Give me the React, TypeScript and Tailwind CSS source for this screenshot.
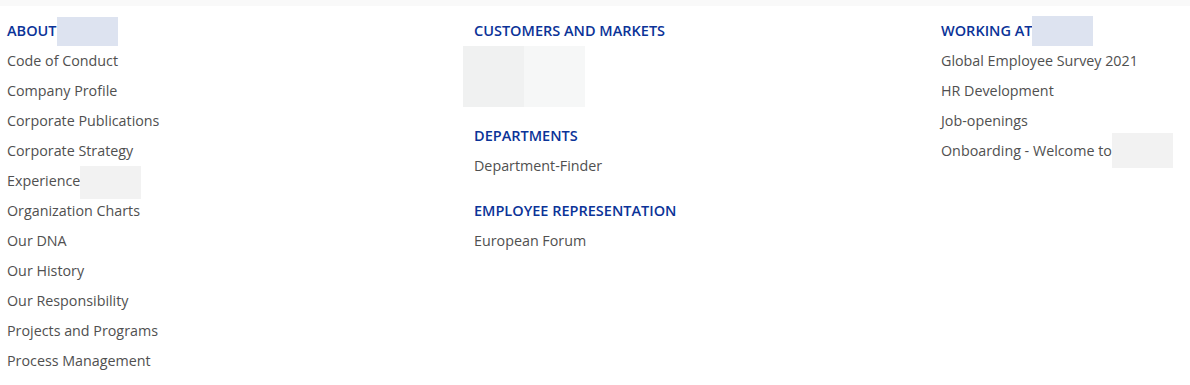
export default function App() {
  const about = [
    "Code of Conduct",
    "Company Profile",
    "Corporate Publications",
    "Corporate Strategy",
    "Experience",
    "Organization Charts",
    "Our DNA",
    "Our History",
    "Our Responsibility",
    "Projects and Programs",
    "Process Management",
  ];
  const working = ["Global Employee Survey 2021", "HR Development", "Job-openings", "Onboarding - Welcome to"];

  const heading = "h-[30px] leading-[29px] text-[14.5px] font-semibold uppercase text-[#0b3398]";
  const link = "h-[30px] leading-[30px] text-[14.3px] text-[#505050] whitespace-nowrap";

  return (
    <div className="w-[1190px] h-[385px] bg-white overflow-hidden" style={{ fontFamily: '"Open Sans", "Noto Sans", sans-serif' }}>
      <div className="h-[6px] bg-[#f9f9f9]" />
      <div className="grid grid-cols-[467px_467px_1fr] pl-[7px] pt-[10px]">
        {/* About */}
        <div>
          <div className={heading + " flex items-start"}>
            ABOUT
            <span className="inline-block w-[61px] h-[29px] mt-[1px] bg-[#dde3f0]" />
          </div>
          {about.map((item) => (
            <div key={item} className={link + " flex items-start"}>
              {item}
              {item === "Experience" && <span className="inline-block w-[61px] h-[33px] bg-[#f2f2f2]" />}
            </div>
          ))}
        </div>

        {/* Customers and markets */}
        <div>
          <div className={heading}>Customers and Markets</div>
          <div className="flex -ml-[11px] h-[61px]">
            <div className="w-[61px] bg-[#f0f1f1]" />
            <div className="w-[61px] bg-[#f6f7f7]" />
          </div>
          <div className={heading + " mt-[14px]"}>Departments</div>
          <div className={link}>Department-Finder</div>
          <div className={heading + " mt-[15px]"}>Employee Representation</div>
          <div className={link}>European Forum</div>
        </div>

        {/* Working at */}
        <div>
          <div className={heading + " flex items-start"}>
            Working at
            <span className="inline-block w-[61px] h-[30px] bg-[#dde3f0]" />
          </div>
          {working.map((item) => (
            <div key={item} className={link + " flex items-start"}>
              {item}
              {item.startsWith("Onboarding") && (
                <span className="inline-block w-[61px] h-[35px] -mt-[3px] bg-[#f2f2f2]" />
              )}
            </div>
          ))}
        </div>
      </div>
    </div>
  );
}
